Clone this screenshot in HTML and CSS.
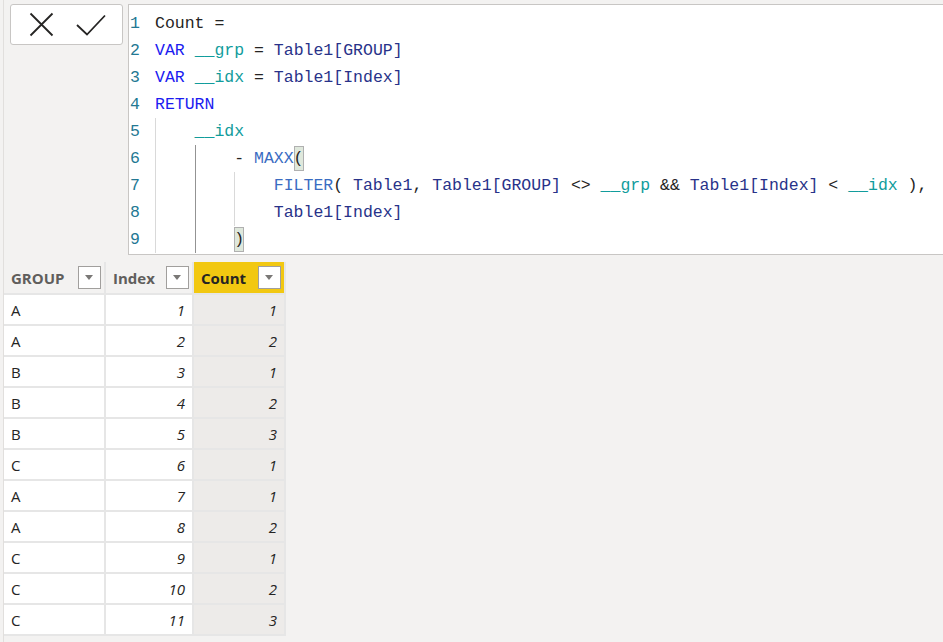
FILE: index.html
```html
<!DOCTYPE html>
<html>
<head>
<meta charset="utf-8">
<link rel="stylesheet" href="styles.css">
</head>
<body>
<div class="page">
  <div class="top">
    <div class="actions">
      <svg class="icon-x" width="26" height="26" viewBox="0 0 26 26"><path d="M1.5 1.5 L23.5 23.5 M23.5 1.5 L1.5 23.5" /></svg>
      <svg class="icon-check" width="30" height="26" viewBox="0 0 30 26"><path d="M1 13 L11 22.5 L29 3.5" /></svg>
    </div>
    <div class="editor">
      <div class="gutter">
        <div>1</div><div>2</div><div>3</div><div>4</div><div>5</div><div>6</div><div>7</div><div>8</div><div>9</div>
      </div>
      <div class="code">
        <div class="line"><span class="op">Count =</span></div>
        <div class="line"><span class="kw">VAR</span> <span class="var">__grp</span> = <span class="tbl">Table1[GROUP]</span></div>
        <div class="line"><span class="kw">VAR</span> <span class="var">__idx</span> = <span class="tbl">Table1[Index]</span></div>
        <div class="line"><span class="kw">RETURN</span></div>
        <div class="line"><span class="ind"></span><span class="var">__idx</span></div>
        <div class="line"><span class="ind"></span><span class="ind active"></span>- <span class="fn">MAXX</span><span class="match">(</span></div>
        <div class="line"><span class="ind"></span><span class="ind active"></span><span class="ind"></span><span class="fn">FILTER</span>( <span class="tbl">Table1</span>, <span class="tbl">Table1[GROUP]</span> &lt;&gt; <span class="var">__grp</span> &amp;&amp; <span class="tbl">Table1[Index]</span> &lt; <span class="var">__idx</span> ),</div>
        <div class="line"><span class="ind"></span><span class="ind active"></span><span class="ind"></span><span class="tbl">Table1[Index]</span></div>
        <div class="line"><span class="ind"></span><span class="ind active"></span><span class="match">)</span></div>
      </div>
    </div>
  </div>
  <div class="grid">
    <div class="hcell"><span>GROUP</span><span class="drop"></span></div>
    <div class="hcell"><span>Index</span><span class="drop"></span></div>
    <div class="hcell sel"><span>Count</span><span class="drop"></span></div>

    <div class="cell">A</div><div class="cell num">1</div><div class="cell num calc">1</div>
    <div class="cell">A</div><div class="cell num">2</div><div class="cell num calc">2</div>
    <div class="cell">B</div><div class="cell num">3</div><div class="cell num calc">1</div>
    <div class="cell">B</div><div class="cell num">4</div><div class="cell num calc">2</div>
    <div class="cell">B</div><div class="cell num">5</div><div class="cell num calc">3</div>
    <div class="cell">C</div><div class="cell num">6</div><div class="cell num calc">1</div>
    <div class="cell">A</div><div class="cell num">7</div><div class="cell num calc">1</div>
    <div class="cell">A</div><div class="cell num">8</div><div class="cell num calc">2</div>
    <div class="cell">C</div><div class="cell num">9</div><div class="cell num calc">1</div>
    <div class="cell">C</div><div class="cell num">10</div><div class="cell num calc">2</div>
    <div class="cell">C</div><div class="cell num">11</div><div class="cell num calc">3</div>
  </div>
</div>
</body>
</html>
```
FILE: styles.css
```css
html, body {
  margin: 0;
  padding: 0;
  background: #f3f2f1;
}
.page {
  margin-left: 3px;
  border-left: 1px solid #e1dfdd;
  min-height: 642px;
  box-sizing: border-box;
  padding-top: 4px;
  overflow: hidden;
}
.top {
  display: flex;
  align-items: flex-start;
  gap: 5px;
  padding-left: 6px;
}
.actions {
  width: 113px;
  height: 41px;
  box-sizing: border-box;
  background: #ffffff;
  border: 1px solid #c8c6c4;
  border-radius: 3px;
  display: flex;
  align-items: flex-start;
  padding: 7px 0 0 18px;
  gap: 21px;
}
.actions svg path {
  fill: none;
  stroke: #252423;
  stroke-width: 1.8;
}
.editor {
  flex: 1;
  height: 251px;
  box-sizing: border-box;
  background: #ffffff;
  border: 1px solid #c8c6c4;
  border-right: none;
  display: flex;
  padding-top: 5px;
  margin-right: -10px;
  font-family: "Liberation Mono", "DejaVu Sans Mono", monospace;
  font-size: 16.5px;
  line-height: 27px;
}
.gutter {
  width: 25px;
  padding-left: 1px;
  color: #237893;
}
.code {
  flex: 1;
  color: #252423;
}
.line {
  white-space: pre;
  height: 27px;
}
.ind {
  display: inline-block;
  vertical-align: top;
  width: 4ch;
  height: 27px;
  box-sizing: border-box;
  border-left: 1px solid #d9d9d9;
}
.ind.active {
  border-left-color: #939393;
}
.kw { color: #1c1cf0; }
.fn { color: #3a6cc2; }
.var { color: #119c9c; }
.tbl { color: #283289; }
.op { color: #252423; }
.match {
  display: inline-block;
  vertical-align: top;
  height: 25px;
  margin-top: 1px;
  line-height: 25px;
  box-sizing: border-box;
  background: #dfe8dc;
  outline: 1px solid #b0b0b0;
  outline-offset: -1px;
}

.grid {
  display: grid;
  grid-template-columns: 100px 86px 90px;
  grid-auto-rows: 29px;
  grid-template-rows: 31px;
  gap: 2px;
  width: max-content;
  margin-top: 7px;
  padding: 0 2px 2px 0;
  background: #e6e6e6;
  font-family: "Open Sans", "Noto Sans", sans-serif;
  font-size: 15px;
  color: #252423;
}
.hcell {
  background: #f3f2f1;
  display: flex;
  align-items: center;
  justify-content: space-between;
  padding: 0 3px 0 7px;
  font-weight: 700;
  color: #605e5c;
}
.hcell.sel {
  background: #f2c811;
  color: #252423;
}
.drop {
  width: 23px;
  height: 23px;
  box-sizing: border-box;
  background: #ffffff;
  border: 1px solid #a19f9d;
  position: relative;
}
.drop::after {
  content: "";
  position: absolute;
  left: 6px;
  top: 8px;
  border-left: 4.5px solid transparent;
  border-right: 4.5px solid transparent;
  border-top: 5px solid #7a7876;
}
.cell {
  background: #ffffff;
  display: flex;
  align-items: center;
  padding: 0 7px;
}
.cell.num {
  justify-content: flex-end;
  font-style: italic;
}
.cell.calc {
  background: #edebe9;
}
```
